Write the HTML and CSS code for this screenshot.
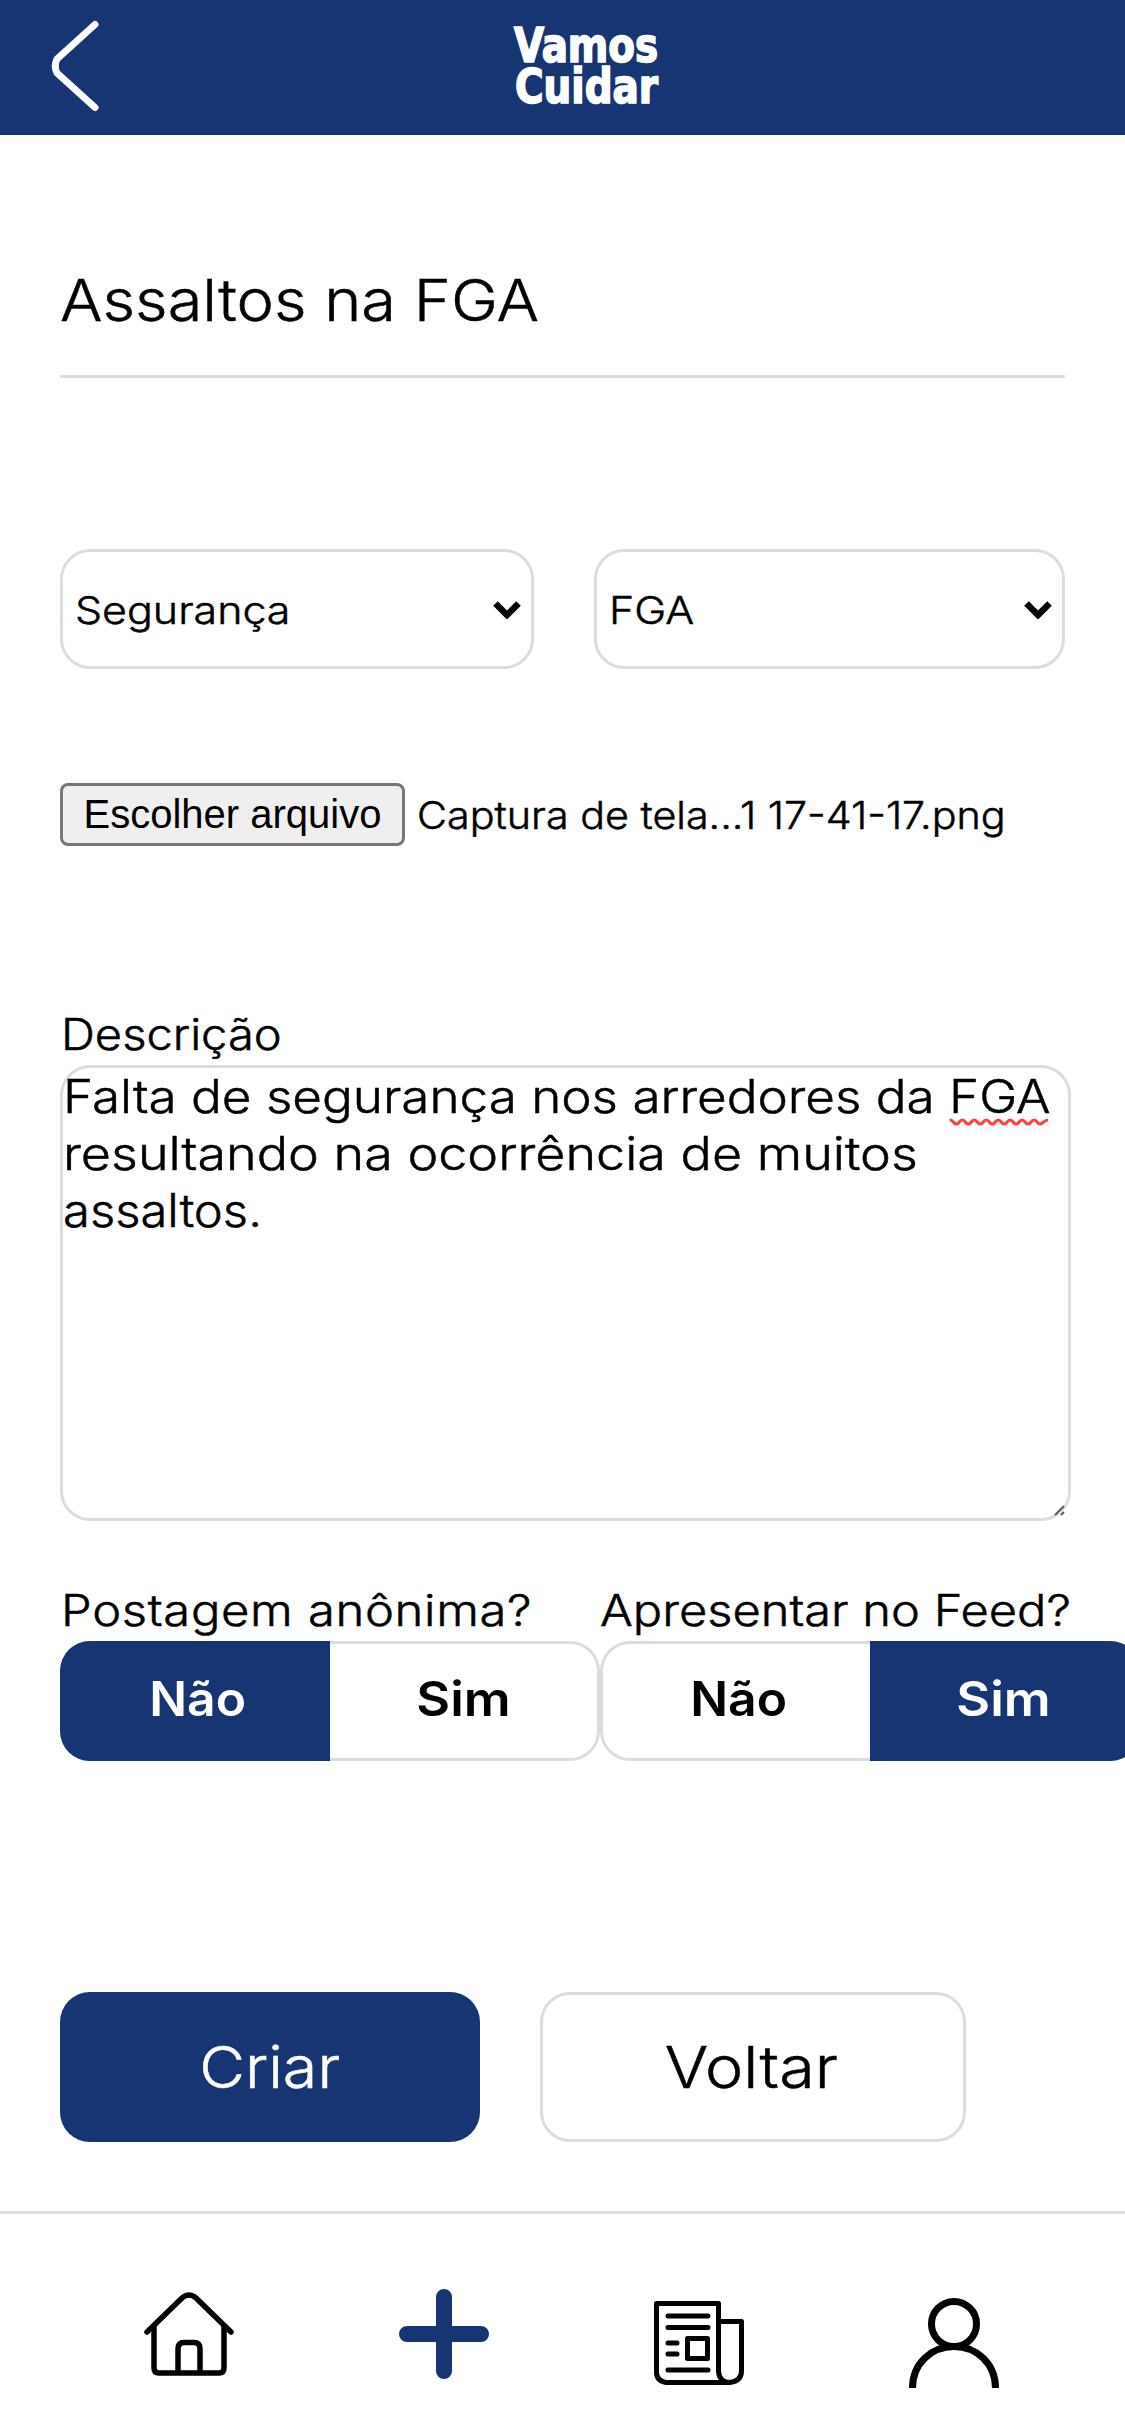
FILE: index.html
```html
<!DOCTYPE html>
<html lang="pt-BR">
<head>
<meta charset="utf-8">
<title>Vamos Cuidar</title>
<link rel="stylesheet" href="styles.css">
</head>
<body>
<header class="topbar">
  <svg class="back" viewBox="0 0 48 92" width="48" height="92"><path d="M44 4.500L6 39Q2.500 46 6 53L44 87.500" fill="none"/></svg>
  <svg class="logo" viewBox="0 0 146 80" width="146" height="80" role="img" aria-label="Vamos Cuidar">
    <text x="0" y="36.500" textLength="144" lengthAdjust="spacingAndGlyphs">Vamos</text>
    <text x="1" y="77.500" textLength="143" lengthAdjust="spacingAndGlyphs">Cuidar</text>
  </svg>
</header>
<main class="form">
  <div class="title"><span class="wide title-text">Assaltos na FGA</span></div>
  <div class="selects">
    <div class="select category"><span class="wide select-text">Segurança</span><svg viewBox="0 0 28 18" width="28" height="18"><path d="M2.500 2.500L14 14L25.500 2.500" fill="none"/></svg></div>
    <div class="select campus"><span class="wide select-text">FGA</span><svg viewBox="0 0 28 18" width="28" height="18"><path d="M2.500 2.500L14 14L25.500 2.500" fill="none"/></svg></div>
  </div>
  <div class="file"><button class="file-button">Escolher arquivo</button><span class="wide file-name">Captura de tela...1 17-41-17.png</span></div>
  <div class="label description-label"><span class="wide description-text">Descrição</span></div>
  <div class="textarea">
    <div class="wide line-1">Falta de segurança nos arredores da <span class="misspelled">FGA<svg class="wave" viewBox="0 0 99 8" width="89" height="8" preserveAspectRatio="none"><path d="M0 2H1C4 2 4 6 7 6S10 2 13 2S16 6 19 6S22 2 25 2S28 6 31 6S34 2 37 2S40 6 43 6S46 2 49 2S52 6 55 6S58 2 61 2S64 6 67 6S70 2 73 2S76 6 79 6S82 2 85 2S88 6 91 6S95 2 99 2" fill="none"/></svg></span></div>
    <div class="wide line-2">resultando na ocorrência de muitos</div>
    <div class="wide line-3">assaltos.</div>
    <svg class="grip" viewBox="0 0 12 12" width="12" height="12"><path d="M1 11L10 2M7 11L10 8" fill="none"/></svg>
  </div>
  <div class="toggles">
    <div class="field">
      <div class="label anonymous-label"><span class="wide anonymous-text">Postagem anônima?</span></div>
      <div class="toggle"><span class="option no on"><span class="wide no-text">Não</span></span><span class="option yes"><span class="wide yes-text">Sim</span></span></div>
    </div>
    <div class="field">
      <div class="label"><span class="wide feed-text">Apresentar no Feed?</span></div>
      <div class="toggle"><span class="option no"><span class="wide no-text">Não</span></span><span class="option yes on"><span class="wide yes-text">Sim</span></span></div>
    </div>
  </div>
  <div class="actions">
    <button class="action create"><span class="wide create-text">Criar</span></button>
    <button class="action return"><span class="wide return-text">Voltar</span></button>
  </div>
</main>
<nav class="tabs">
  <svg viewBox="144 2285 90 110" width="90" height="110"><g class="stroke" stroke-width="5.500"><path d="M147 2332L182 2298Q189 2292 196 2298L231 2332"/><path d="M154 2327V2368Q154 2373 159 2373H219Q224 2373 224 2368V2327"/><path d="M178 2372V2349Q178 2342.500 184 2342.500H194Q200 2342.500 200 2349V2372"/></g></svg>
  <svg viewBox="399 2285 90 110" width="90" height="110"><path class="plus" d="M444 2297V2371M407 2334H481"/></svg>
  <svg viewBox="654 2285 90 110" width="90" height="110"><g class="stroke" stroke-width="5"><path d="M730 2382.500H666Q656.500 2381 656.500 2372V2303.500H718.500V2371Q719 2382 730 2382.500Q741.500 2381 741.500 2371V2321.500H720"/><path d="M668 2316H708M668 2327.500H708M668 2343H677M668 2354H677M668 2370H708"/><path d="M687.500 2338.500H707.500V2358.500H687.500Z"/></g></svg>
  <svg viewBox="909 2285 90 110" width="90" height="110"><g fill="none" stroke="#000" stroke-width="7"><circle cx="954" cy="2324" r="22.500"/><path d="M912.500 2388C912.500 2364 931 2346.500 954 2346.500S995.500 2364 995.500 2388"/></g></svg>
</nav>
</body>
</html>
```
FILE: styles.css
```css
* { box-sizing: border-box; }
body { margin: 0; width: 1125px; height: 2436px; overflow: hidden; background: #fff; color: #000; font-family: Inter, sans-serif; font-weight: 300; }
svg { display: block; }
button { font: inherit; margin: 0; padding: 0; }

/* Widened letterforms */
.wide { display: inline-block; transform-origin: 0 50%; -webkit-text-stroke: 0.5px currentColor; }
.title-text { transform: scaleX(1.094); }
.select-text { transform: scaleX(1.115); }
.file-name { transform: scaleX(1.071); }
.description-text { transform: scaleX(1.087); }
.anonymous-text { transform: scaleX(1.13); letter-spacing: 0.6px; }
.feed-text { transform: scaleX(1.127); }
.wide.no-text { transform: scaleX(1.038); transform-origin: 50% 50%; }
.wide.yes-text { transform: scaleX(1.085); transform-origin: 50% 50%; }
.wide.create-text { transform: scaleX(1.089); transform-origin: 50% 50%; }
.wide.return-text { transform: scaleX(1.12); transform-origin: 50% 50%; }

.topbar { height: 135px; background: #183573; display: flex; padding: 20px 0 0 51px; }
.back path { stroke: #fff; stroke-width: 7; stroke-linecap: round; stroke-linejoin: round; }
.logo { margin: 5px 0 0 415px; overflow: visible; }
.logo text { fill: #fff; stroke: #fff; stroke-width: 1.6; font: bold 48px "DejaVu Sans Condensed", "DejaVu Sans", sans-serif; }
.form { padding: 115px 60px 0; }
.title { height: 128px; line-height: 100px; font-size: 57.7px; border-bottom: 3px solid #dbdcde; white-space: nowrap; }
.selects { display: flex; gap: 60px; margin-top: 171px; }
.select { display: flex; justify-content: space-between; align-items: center; height: 120px; padding: 2px 10px 0 12px; border: 3px solid #d9dde0; border-radius: 30px; font-size: 38.5px; }
.select path { stroke: #000; stroke-width: 6.5; }
.category { width: 474px; }
.campus { width: 471px; }
.file { display: flex; align-items: center; height: 63px; margin-top: 114px; font-size: 38.5px; white-space: nowrap; }
.file-button { width: 345px; height: 63px; border: 3px solid #767676; border-radius: 8px; background: #efefef; color: #000; font: 40px "Liberation Sans", sans-serif; }
.file-name { margin-left: 12px; }
.label { height: 58px; line-height: 54px; font-size: 43.3px; white-space: nowrap; }
.description-label { margin-top: 161px; padding-left: 1px; }
.anonymous-label { padding-left: 1px; }
.textarea { position: relative; display: flex; flex-direction: column; align-items: flex-start; width: 1011px; height: 456px; border: 3px solid #dadce0; border-radius: 30px; font-size: 46.2px; line-height: 57px; white-space: nowrap; }
.line-1 { transform: scaleX(1.108); }
.line-2 { transform: scaleX(1.127); }
.line-3 { transform: scaleX(1.06); }
.misspelled { position: relative; }
.wave { position: absolute; left: 0; top: 50px; }
.wave path { stroke: #ff3f38; stroke-width: 3; }
.grip { position: absolute; right: 2px; bottom: 2px; }
.grip path { stroke: #555; stroke-width: 1.8; }
.toggles { display: flex; margin-top: 62px; width: 1080px; }
.field { width: 540px; flex: none; }
.toggle { display: flex; height: 120px; border: 3px solid #d9dde0; border-radius: 30px; }
.option { flex: none; width: 267px; display: flex; align-items: center; justify-content: center; padding-bottom: 5px; font-size: 48px; font-weight: 600; }
.option .wide { -webkit-text-stroke: 0; }
.no { padding-left: 5px; }
.on { width: 270px; margin: -3px; background: #183573; color: #fff; }
.no.on { margin-right: 0; border-radius: 30px 0 0 30px; }
.yes.on { margin-left: 0; padding-right: 3px; border-radius: 0 30px 30px 0; }
.actions { display: flex; gap: 60px; margin-top: 231px; }
.action { height: 150px; border-radius: 30px; font-size: 57.7px; }
.create { width: 420px; border: 0; background: #183573; color: #fff; }
.return { width: 426px; padding-right: 3px; border: 3px solid #d9dde0; background: #fff; color: #000; }
.tabs { display: flex; gap: 165px; margin-top: 69px; padding: 71px 0 0 144px; border-top: 3px solid #d9dde0; }
.stroke { fill: none; stroke: #000; stroke-linecap: round; stroke-linejoin: round; }
.plus { fill: none; stroke: #183573; stroke-width: 16; stroke-linecap: round; }
```
